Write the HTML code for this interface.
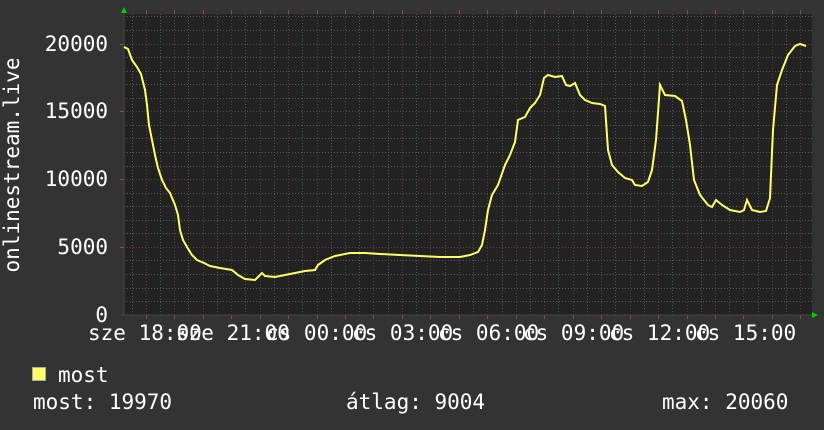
<!DOCTYPE html>
<html><head><meta charset="utf-8"><style>
html,body{margin:0;padding:0;background:#333;}
svg{display:block}
text{font-family:"DejaVu Sans Mono","Liberation Mono",monospace;fill:#fff;font-size:21px}
</style></head><body>
<svg width="824" height="430" xmlns="http://www.w3.org/2000/svg">
<rect width="824" height="430" fill="#333"/>
<rect x="124" y="14" width="688" height="301" fill="#222"/>
<path stroke="#555" stroke-width="1" stroke-dasharray="1,2" fill="none" d="M132.5 14V315M160.5 14V315M188.5 14V315M217.5 14V315M245.5 14V315M274.5 14V315M302.5 14V315M331.5 14V315M359.5 14V315M388.5 14V315M416.5 14V315M445.5 14V315M473.5 14V315M502.5 14V315M530.5 14V315M558.5 14V315M587.5 14V315M615.5 14V315M644.5 14V315M672.5 14V315M701.5 14V315M729.5 14V315M758.5 14V315M786.5 14V315
M124 301.5H812M124 288.5H812M124 274.5H812M124 260.5H812M124 233.5H812M124 220.5H812M124 206.5H812M124 193.5H812M124 166.5H812M124 152.5H812M124 138.5H812M124 125.5H812M124 98.5H812M124 84.5H812M124 71.5H812M124 57.5H812M124 30.5H812M124 16.5H812"/>
<path stroke="#6a3838" stroke-width="1" stroke-dasharray="1,2" fill="none" d="M146.5 14V315M174.5 14V315M203.5 14V315M231.5 14V315M260.5 14V315M288.5 14V315M317.5 14V315M345.5 14V315M373.5 14V315M402.5 14V315M430.5 14V315M459.5 14V315M487.5 14V315M516.5 14V315M544.5 14V315M573.5 14V315M601.5 14V315M630.5 14V315M658.5 14V315M687.5 14V315M715.5 14V315M743.5 14V315M772.5 14V315M800.5 14V315
M124 247.5H812M124 179.5H812M124 111.5H812M124 44.5H812"/>
<path stroke="#a04040" stroke-width="1" fill="none" d="M146.5 10V14M174.5 10V14M203.5 10V14M231.5 10V14M260.5 10V14M288.5 10V14M317.5 10V14M345.5 10V14M373.5 10V14M402.5 10V14M430.5 10V14M459.5 10V14M487.5 10V14M516.5 10V14M544.5 10V14M573.5 10V14M601.5 10V14M630.5 10V14M658.5 10V14M687.5 10V14M715.5 10V14M743.5 10V14M772.5 10V14M800.5 10V14
M146.5 315V319M174.5 315V319M203.5 315V319M231.5 315V319M260.5 315V319M288.5 315V319M317.5 315V319M345.5 315V319M373.5 315V319M402.5 315V319M430.5 315V319M459.5 315V319M487.5 315V319M516.5 315V319M544.5 315V319M573.5 315V319M601.5 315V319M630.5 315V319M658.5 315V319M687.5 315V319M715.5 315V319M743.5 315V319M772.5 315V319M800.5 315V319
M120 247.5H124M120 179.5H124M120 111.5H124M120 44.5H124"/>
<line x1="124" y1="12" x2="124" y2="315" stroke="#444"/>
<line x1="121" y1="315" x2="814" y2="315" stroke="#444"/>
<polygon points="121,13 124,7 127,13" fill="#0c0"/>
<polygon points="812,312 818,315 812,318" fill="#0c0"/>
<polyline fill="none" stroke="#ffff66" stroke-width="2" points="124,47 128,49 132,60 137,67 141,74 145,90 147,105 149,125 152,140 155,155 158,168 162,180 166,188 170,193 175,205 178,215 180,230 183,240 187,247 192,255 197,260 204,263 210,266 220,268 232,270 238,275 245,279 255,280 258,277 262,273 265,276 275,277 285,275 295,273 305,271 315,270 318,265 325,260 335,256 350,253 365,253 380,254 400,255 420,256 440,257 460,257 470,255 478,252 482,245 485,230 488,210 492,195 498,185 505,165 510,155 515,142 518,120 525,117 530,108 535,103 540,95 544,78 548,75 555,77 562,76 566,85 570,86 575,83 580,95 585,100 592,103 600,104 605,106 608,150 612,165 618,172 625,178 632,180 635,185 642,186 648,182 652,170 656,140 660,85 665,95 675,96 682,101 686,120 690,145 694,180 700,195 708,205 712,207 716,200 722,205 730,210 740,212 744,210 747,200 752,210 760,212 766,211 770,198 773,130 777,85 782,70 788,55 795,46 800,44 806,46"/>
<g text-anchor="end">
<text x="108" y="51">20000</text>
<text x="108" y="118">15000</text>
<text x="108" y="186">10000</text>
<text x="108" y="254">5000</text>
<text x="108" y="322">0</text>
</g>
<text transform="translate(19,165) rotate(-90)" text-anchor="middle">onlinestream.live</text>
<g>
<text x="88" y="340">sze 18:00</text>
<text x="176" y="340">sze 21:00</text>
<text x="266" y="340">cs 00:00</text>
<text x="352" y="340">cs 03:00</text>
<text x="438" y="340">cs 06:00</text>
<text x="523" y="340">cs 09:00</text>
<text x="609" y="340">cs 12:00</text>
<text x="695" y="340">cs 15:00</text>
</g>
<rect x="32.5" y="367.5" width="13" height="13" fill="#ffff66" stroke="#aaa"/>
<text x="58" y="382">most</text>
<text x="33" y="409">most: 19970</text>
<text x="346" y="409">átlag: 9004</text>
<text x="662" y="409">max: 20060</text>
</svg>
</body></html>
